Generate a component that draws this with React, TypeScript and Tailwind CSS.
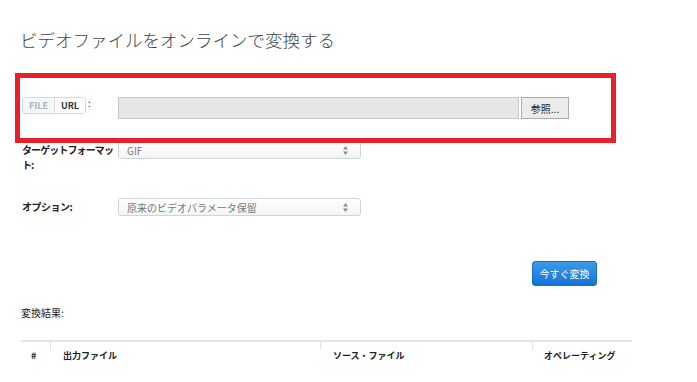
import React from "react";

const FONT = { fontFamily: '"Noto Sans CJK JP", "Liberation Sans", sans-serif' };

function SelectBox({ value }: { value: string }) {
  return (
    <div className="flex h-[18px] w-[243px] items-center justify-between rounded-[3px] border border-[#cfd4da] bg-gradient-to-b from-white to-[#f3f4f5] pl-[8px] pr-[12px] text-[10px] text-[#777]">
      <span>{value}</span>
      <svg width="5" height="9" viewBox="0 0 5 9" className="text-[#8a8a8a]">
        <path d="M2.5 0 L5 3.5 L0 3.5 Z" fill="currentColor" />
        <path d="M0 5.5 L5 5.5 L2.5 9 Z" fill="currentColor" />
      </svg>
    </div>
  );
}

export default function App() {
  return (
    <div className="relative h-[382px] w-[697px] overflow-hidden bg-white text-[#333]" style={FONT}>
      <div className="pl-[20px]">
        <h1 className="pt-[27px] text-[17.5px] font-light leading-[26px] text-[#444]">
          ビデオファイルをオンラインで変換する
        </h1>

        {/* file / url row */}
        <div className="mt-[44px] flex items-start pl-[2px]">
          <div className="flex w-[96px] items-start">
            <div className="flex h-[17px] overflow-hidden rounded-[3px] border border-[#d3d9df] text-[9px] font-bold leading-[15px]">
              <span className="bg-[#f4f6f8] px-[6px] text-[#a9b3bd]">FILE</span>
              <span className="border-l border-[#d3d9df] bg-white px-[6px] text-[#333]">URL</span>
            </div>
            <span className="ml-[2px] text-[10px] leading-[12px]">:</span>
          </div>
          <div className="h-[22px] w-[401px] border border-[#c6c6c6] bg-[#e6e6e6]" />
          <button className="ml-[2px] h-[22px] w-[48px] border border-[#adadad] bg-[#ececec] text-[10px] text-[#222]">
            参照...
          </button>
        </div>

        {/* target format */}
        <div className="mt-[22px] flex items-start pl-[2px]">
          <div className="w-[96px] whitespace-nowrap pt-[1px] text-[10px] font-bold leading-[15px] tracking-[-0.9px] text-[#222]">
            ターゲットフォーマッ
            <br />
            ト:
          </div>
          <SelectBox value="GIF" />
        </div>

        {/* options */}
        <div className="mt-[26px] flex items-start pl-[2px]">
          <div className="w-[96px] pt-[3px] text-[10px] font-bold leading-[12px] tracking-[-0.5px] text-[#222]">
            オプション:
          </div>
          <SelectBox value="原来のビデオパラメータ保留" />
        </div>

        <div className="mt-[45px] flex w-[577px] justify-end">
          <button className="h-[25px] w-[65px] rounded-[3px] border border-[#1a6fc4] bg-gradient-to-b from-[#3d9bea] to-[#1273d6] text-[10px] text-white">
            今すぐ変換
          </button>
        </div>

        <div className="mt-[21px] pl-[1px] text-[10px] leading-[12px] text-[#222]">変換結果:</div>

        <div className="mt-[21px] ml-[1px] flex w-[611px] border-t-2 border-[#e4e4e4] text-[9px] font-bold text-[#222]">
          <div className="w-[29px]">
            <div className="h-[8px]" />
            <div className="pl-[10px] leading-[12px]">#</div>
          </div>
          <div className="w-[270px]">
            <div className="h-[8px] border-l border-[#e2e2e2]" />
            <div className="pl-[13px] leading-[12px]">出力ファイル</div>
          </div>
          <div className="w-[212px]">
            <div className="h-[8px] border-l border-[#e2e2e2]" />
            <div className="pl-[13px] leading-[12px]">ソース・ファイル</div>
          </div>
          <div className="flex-1">
            <div className="h-[8px] border-l border-[#e2e2e2]" />
            <div className="pl-[12px] leading-[12px]">オペレーティング</div>
          </div>
        </div>
      </div>

      {/* highlight annotation */}
      <div className="pointer-events-none absolute left-[15px] top-[73px] h-[70px] w-[601px] border-[5px] border-[#e8202a]" />
    </div>
  );
}
